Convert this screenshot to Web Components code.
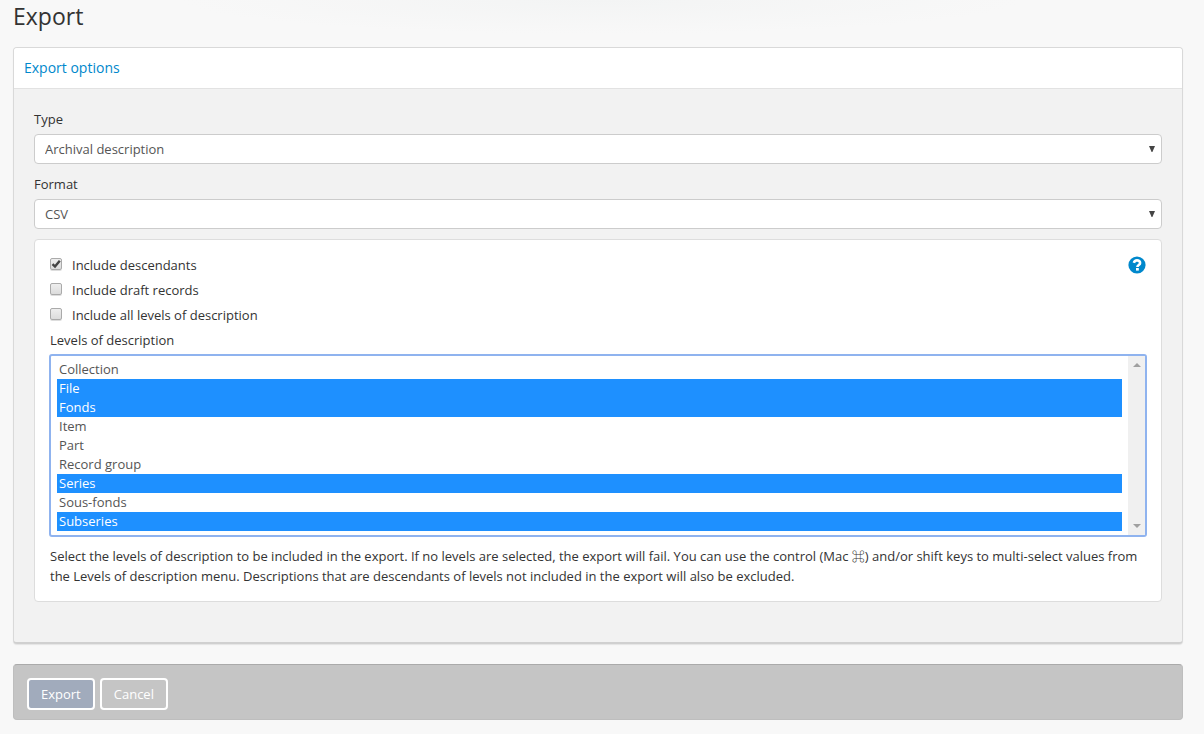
<!DOCTYPE html>
<html lang="en">
<head>
<meta charset="utf-8">
<meta name="viewport" content="width=device-width, initial-scale=1">
<title>Export</title>
<style>
  body {
    margin: 0;
    background: #f8f8f8 radial-gradient(420px 34px at 50% 0, #f3f4f4, #f8f8f8) no-repeat;
    color: #333;
    font: 13px/20px "Open Sans", "Noto Sans CJK JP", sans-serif;
  }
</style>
</head>
<body>
<export-page></export-page>

<template id="page-template">
  <style>
    :host { display: block; padding: 0 21px 14px 13px; }
    h1 { margin: 0 0 15px; font-size: 23px; line-height: 32px; font-weight: 400; }
    .checks { display: grid; gap: 5px; }
    .top { display: flex; justify-content: space-between; align-items: flex-start; }
    p { margin: 9px 0 0; }
    .help { padding: 0; border: 0; background: none; cursor: pointer; display: flex; margin-top: 1px; }
    .help svg { width: 18px; height: 18px; }
    form { margin: 0; }
  </style>
  <h1>Export</h1>
  <form onsubmit="return false">
    <option-panel heading="Export options">
      <select-field label="Type" options="Archival description|Authority record|Repository"></select-field>
      <select-field label="Format" options="CSV|XML"></select-field>
      <option-card>
        <div class="top">
          <div class="checks">
            <check-option checked>Include descendants</check-option>
            <check-option>Include draft records</check-option>
            <check-option>Include all levels of description</check-option>
          </div>
          <button class="help" type="button" aria-label="Help">
            <svg viewBox="0 0 18 18" aria-hidden="true">
              <circle cx="9" cy="9" r="8.6" fill="#0088cc"/>
              <path d="M5.9 6.9C6.3 5.1 7.4 4.4 9 4.4c1.8 0 3.1 1 3.1 2.5 0 2.1-2.7 2-2.7 4" fill="none" stroke="#fff" stroke-width="2.6"/>
              <rect x="8" y="12" width="2.8" height="2.6" fill="#fff"/>
            </svg>
          </button>
        </div>
        <level-list label="Levels of description"
          options="Collection|File|Fonds|Item|Part|Record group|Series|Sous-fonds|Subseries"
          selected="File|Fonds|Series|Subseries"></level-list>
        <p>Select the levels of description to be included in the export. If no levels are selected, the export will fail. You can use the control (Mac ⌘) and/or shift keys to multi-select values from the Levels of description menu. Descriptions that are descendants of levels not included in the export will also be excluded.</p>
      </option-card>
    </option-panel>
    <action-bar>
      <action-button primary>Export</action-button>
      <action-button>Cancel</action-button>
    </action-bar>
  </form>
</template>

<template id="panel-template">
  <style>
    :host {
      display: block; border: 1px solid #d9d9d9; border-bottom: 2px solid #d0d0d0; border-radius: 4px;
      box-shadow: 0 1px 1px #e4e4e4; background: #f2f2f2;
    }
    h2 {
      margin: 0; padding: 10px; border-bottom: 1px solid #e2e2e2; border-radius: 3px 3px 0 0;
      background: #fff; font-size: 14px; line-height: 20px; font-weight: 400;
    }
    a { color: #0088cc; text-decoration: none; }
    .body { display: grid; gap: 10px; padding: 20px 20px 40px; }
  </style>
  <h2><a href="#options"></a></h2>
  <div class="body" id="options"><slot></slot></div>
</template>

<template id="select-template">
  <style>
    :host { display: block; }
    label { display: block; margin-bottom: 5px; }
    .box { position: relative; }
    select {
      display: block; box-sizing: border-box; width: 100%; height: 30px; padding: 0 10px;
      appearance: none; border: 1px solid #ccc; border-radius: 4px; background: #fff;
      color: #555; font: inherit; outline-color: #86aff0;
    }
    svg { position: absolute; right: 7px; top: 12px; width: 6px; height: 6px; pointer-events: none; }
  </style>
  <label for="field"></label>
  <div class="box">
    <select id="field"></select>
    <svg viewBox="0 0 6 6" aria-hidden="true"><path d="M0 0H6L3.4 6H2.6Z" fill="#444"/></svg>
  </div>
</template>

<template id="card-template">
  <style>
    :host {
      display: block; padding: 15px; border: 1px solid #ddd; border-radius: 4px; background: #fff;
    }
  </style>
  <slot></slot>
</template>

<template id="check-template">
  <style>
    :host { display: block; }
    label { display: flex; align-items: flex-start; gap: 10px; }
    input {
      appearance: none; box-sizing: border-box; flex: none; width: 12px; height: 12px; margin: 3px 0 0;
      border: 1px solid #aaa; border-radius: 2px; background: linear-gradient(#eee, #dcdcdc);
      box-shadow: 0 1px 0 #ddd;
    }
    .mark { position: relative; display: flex; }
    svg { position: absolute; left: 0; top: 3px; width: 12px; height: 12px; display: none; pointer-events: none; }
    input:checked + svg { display: block; }
  </style>
  <label>
    <span class="mark"><input type="checkbox"><svg viewBox="0 0 12 12" aria-hidden="true"><path d="M2.5 6.2L5 8.6 9.8 2.8" fill="none" stroke="#444" stroke-width="2.4"/></svg></span>
    <span><slot></slot></span>
  </label>
</template>

<template id="list-template">
  <style>
    :host { display: block; margin-top: 5px; }
    label { display: block; margin-bottom: 4px; }
    .frame { display: flex; margin: 0 -1px; border: 2px solid #8fb3ef; border-radius: 3px; background: #fff; }
    select {
      flex: 1; min-width: 0; box-sizing: border-box; height: 179px; margin: 0; padding: 4px 6px;
      border: 0; outline: 0; overflow: hidden; background: none; color: #555; font: inherit;
    }
    option { display: block; box-sizing: border-box; height: 19px; min-height: 19px; padding: 0 2px; line-height: 19px; }
    option:checked { background: #1e90ff linear-gradient(#1e90ff, #1e90ff); color: #fff; font-weight: 500; }
    .rail {
      flex: none; width: 17px; box-sizing: border-box; padding: 7px 0; background: #f0f0f0;
      display: flex; flex-direction: column; align-items: center; justify-content: space-between;
    }
    svg { width: 8px; height: 4px; }
  </style>
  <label for="levels"></label>
  <div class="frame">
    <select id="levels" multiple size="9"></select>
    <div class="rail" aria-hidden="true">
      <svg viewBox="0 0 8 4"><path d="M4 0L8 4H0Z" fill="#a0a0a0"/></svg>
      <svg viewBox="0 0 8 4"><path d="M0 0H8L4 4Z" fill="#a0a0a0"/></svg>
    </div>
  </div>
</template>

<template id="bar-template">
  <style>
    :host {
      display: flex; gap: 5px; margin-top: 20px; padding: 13px 13px 9px; border: 1px solid #bebebe;
      border-top-color: #aaa; border-radius: 4px; background: #c5c5c5;
    }
  </style>
  <slot></slot>
</template>

<template id="button-template">
  <style>
    :host { display: block; }
    button {
      display: block; padding: 4px 12px; border: 2px solid #fff; border-radius: 4px;
      background: transparent; color: #fff; font: inherit; cursor: pointer;
    }
    :host([primary]) button { background: #a1abbc; }
  </style>
  <button type="button"><slot></slot></button>
</template>

<script>
  class TemplateElement extends HTMLElement {
    constructor() {
      super();
      const template = document.getElementById(this.constructor.template);
      this.attachShadow({ mode: "open" }).append(template.content.cloneNode(true));
    }
    find(selector) { return this.shadowRoot.querySelector(selector); }
    list(name) { return (this.getAttribute(name) || "").split("|"); }
  }

  class OptionPanel extends TemplateElement {
    static template = "panel-template";
    connectedCallback() { this.find("a").textContent = this.getAttribute("heading"); }
  }

  class SelectField extends TemplateElement {
    static template = "select-template";
    connectedCallback() {
      this.find("label").textContent = this.getAttribute("label");
      const chosen = this.list("selected");
      this.find("select").replaceChildren(...this.list("options").map(text => {
        const selected = chosen.includes(text);
        return new Option(text, text, selected, selected);
      }));
    }
  }

  class LevelList extends SelectField { static template = "list-template"; }
  class OptionCard extends TemplateElement { static template = "card-template"; }
  class ActionBar extends TemplateElement { static template = "bar-template"; }
  class ActionButton extends TemplateElement { static template = "button-template"; }
  class ExportPage extends TemplateElement { static template = "page-template"; }

  class CheckOption extends TemplateElement {
    static template = "check-template";
    connectedCallback() { this.find("input").checked = this.hasAttribute("checked"); }
  }

  customElements.define("option-panel", OptionPanel);
  customElements.define("select-field", SelectField);
  customElements.define("level-list", LevelList);
  customElements.define("option-card", OptionCard);
  customElements.define("check-option", CheckOption);
  customElements.define("action-bar", ActionBar);
  customElements.define("action-button", ActionButton);
  customElements.define("export-page", ExportPage);
</script>
</body>
</html>
